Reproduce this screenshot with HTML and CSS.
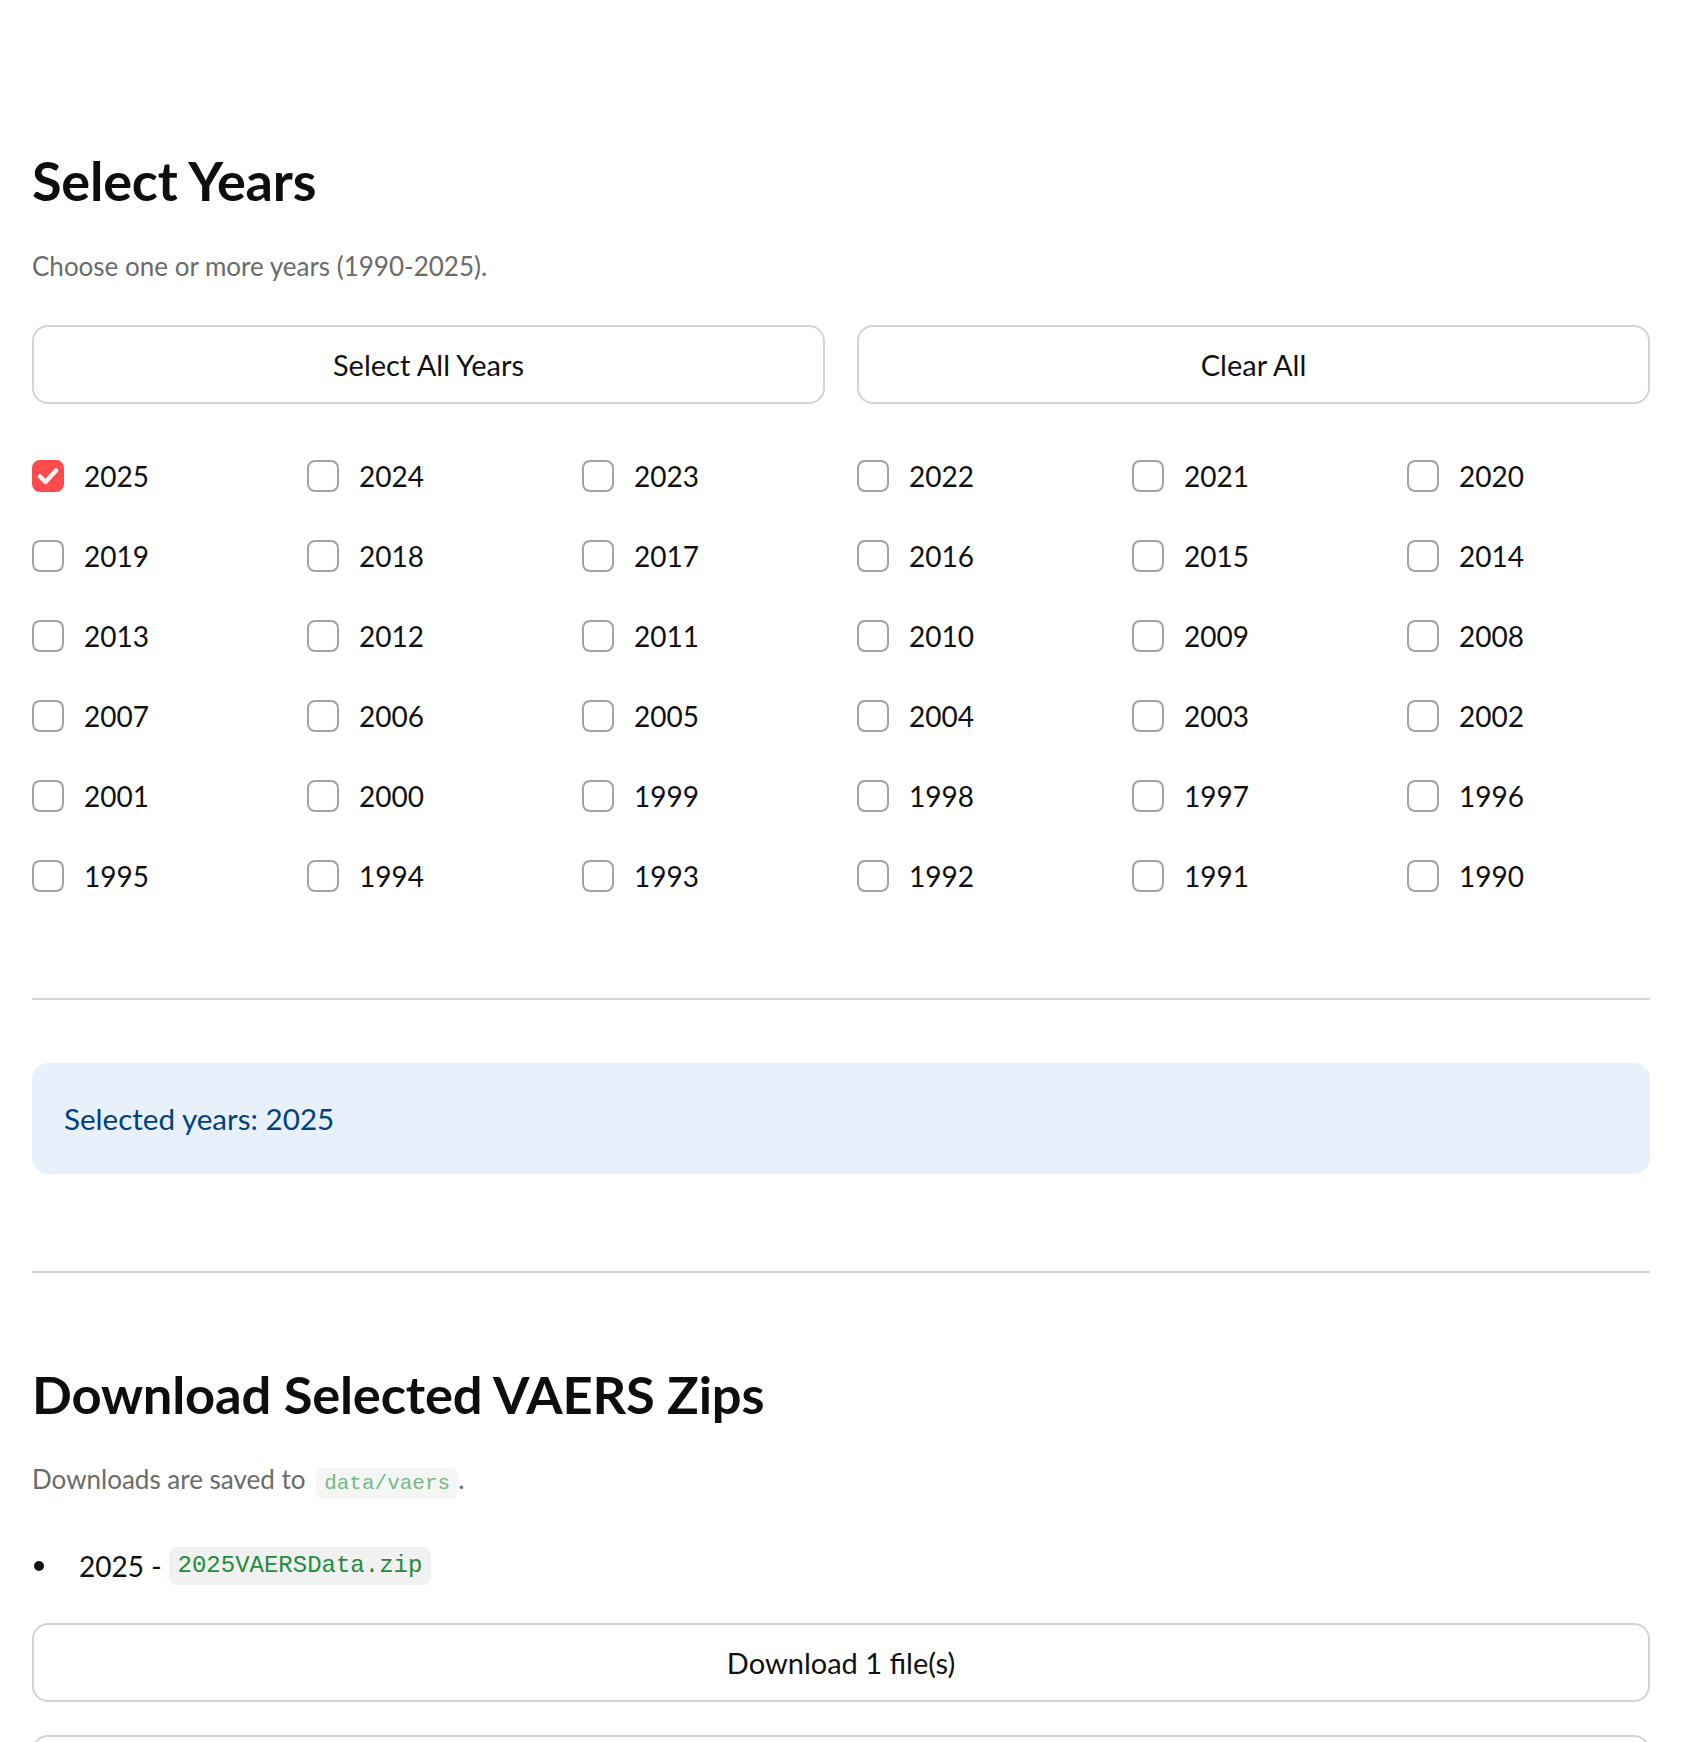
FILE: index.html
```html
<!DOCTYPE html>
<html lang="en">
<head>
<meta charset="utf-8">
<title>Select Years</title>
<link rel="stylesheet" href="styles.css">
</head>
<body>
<main class="page">
  <h2 class="title first">Select Years</h2>
  <p class="caption cap1">Choose one or more years (1990-2025).</p>
  <div class="btn-row">
    <button class="btn">Select All Years</button>
    <button class="btn">Clear All</button>
  </div>
  <div class="year-grid">
    <label class="year"><span class="box checked"><svg viewBox="0 0 32 32" width="32" height="32"><polyline points="8,16.5 13.5,22 24,10.5" fill="none" stroke="#f4f4f6" stroke-width="4.5" stroke-linecap="round" stroke-linejoin="round"/></svg></span><span class="yl">2025</span></label>
    <label class="year"><span class="box"></span><span class="yl">2024</span></label>
    <label class="year"><span class="box"></span><span class="yl">2023</span></label>
    <label class="year"><span class="box"></span><span class="yl">2022</span></label>
    <label class="year"><span class="box"></span><span class="yl">2021</span></label>
    <label class="year"><span class="box"></span><span class="yl">2020</span></label>
    <label class="year"><span class="box"></span><span class="yl">2019</span></label>
    <label class="year"><span class="box"></span><span class="yl">2018</span></label>
    <label class="year"><span class="box"></span><span class="yl">2017</span></label>
    <label class="year"><span class="box"></span><span class="yl">2016</span></label>
    <label class="year"><span class="box"></span><span class="yl">2015</span></label>
    <label class="year"><span class="box"></span><span class="yl">2014</span></label>
    <label class="year"><span class="box"></span><span class="yl">2013</span></label>
    <label class="year"><span class="box"></span><span class="yl">2012</span></label>
    <label class="year"><span class="box"></span><span class="yl">2011</span></label>
    <label class="year"><span class="box"></span><span class="yl">2010</span></label>
    <label class="year"><span class="box"></span><span class="yl">2009</span></label>
    <label class="year"><span class="box"></span><span class="yl">2008</span></label>
    <label class="year"><span class="box"></span><span class="yl">2007</span></label>
    <label class="year"><span class="box"></span><span class="yl">2006</span></label>
    <label class="year"><span class="box"></span><span class="yl">2005</span></label>
    <label class="year"><span class="box"></span><span class="yl">2004</span></label>
    <label class="year"><span class="box"></span><span class="yl">2003</span></label>
    <label class="year"><span class="box"></span><span class="yl">2002</span></label>
    <label class="year"><span class="box"></span><span class="yl">2001</span></label>
    <label class="year"><span class="box"></span><span class="yl">2000</span></label>
    <label class="year"><span class="box"></span><span class="yl">1999</span></label>
    <label class="year"><span class="box"></span><span class="yl">1998</span></label>
    <label class="year"><span class="box"></span><span class="yl">1997</span></label>
    <label class="year"><span class="box"></span><span class="yl">1996</span></label>
    <label class="year"><span class="box"></span><span class="yl">1995</span></label>
    <label class="year"><span class="box"></span><span class="yl">1994</span></label>
    <label class="year"><span class="box"></span><span class="yl">1993</span></label>
    <label class="year"><span class="box"></span><span class="yl">1992</span></label>
    <label class="year"><span class="box"></span><span class="yl">1991</span></label>
    <label class="year"><span class="box"></span><span class="yl">1990</span></label>
  </div>
  <hr class="divider d1">
  <div class="info">Selected years: 2025</div>
  <hr class="divider d2">
  <h2 class="title second">Download Selected VAERS Zips</h2>
  <p class="caption cap2">Downloads are saved to <code class="code-muted">data/vaers</code>.</p>
  <ul class="files">
    <li><span class="item-text">2025 -</span><code class="code">2025VAERSData.zip</code></li>
  </ul>
  <button class="btn wide dl">Download 1 file(s)</button>
  <button class="btn wide next"></button>
</main>
</body>
</html>
```

FILE: styles.css
```css
html, body {
  margin: 0;
  padding: 0;
  background: #ffffff;
}
body {
  font-family: "Source Sans Pro", Lato, "Noto Sans", sans-serif;
  color: #111111;
  overflow: hidden;
}
.page {
  padding: 0 32px;
  width: 1618px;
  display: flex;
  flex-direction: column;
}
.title {
  font-size: 54px;
  font-weight: 700;
  line-height: 1.2;
  margin: 0;
  color: #0e0e0e;
  letter-spacing: -0.2px;
}
.title.first { margin-top: 149px; }
.title.second {
  margin-top: 89px;
  font-size: 52.5px;
  line-height: 63px;
}
.caption {
  font-size: 26px;
  line-height: 39px;
  color: #6b6b6b;
  margin: 0;
}
.cap1 { margin-top: 33px; }
.cap2 { margin-top: 35px; }
.btn-row {
  margin-top: 39px;
  display: grid;
  grid-template-columns: 1fr 1fr;
  gap: 32px;
}
.btn {
  height: 79px;
  border: 2px solid #d3d3d5;
  border-radius: 16px;
  background: #ffffff;
  font-family: inherit;
  font-size: 29px;
  color: #111111;
  padding: 0 24px;
  display: flex;
  align-items: center;
  justify-content: center;
}
.year-grid {
  margin-top: 32px;
  display: grid;
  grid-template-columns: repeat(6, 1fr);
  column-gap: 32px;
  grid-auto-rows: 80px;
}
.year {
  display: flex;
  align-items: center;
  gap: 20px;
  font-size: 28px;
}
.box {
  width: 32px;
  height: 32px;
  box-sizing: border-box;
  border: 2px solid #a3a3a6;
  border-radius: 8px;
  flex: none;
  display: flex;
}
.box.checked {
  background: #ff4b4b;
  border-color: #ff4b4b;
}
.box.checked svg {
  margin: -2px;
}
.divider {
  border: 0;
  height: 2px;
  background: #d6d6d8;
  margin: 0;
  width: 100%;
}
.d1 { margin-top: 82px; }
.d2 { margin-top: 97px; }
.info {
  margin-top: 63px;
  height: 111px;
  box-sizing: border-box;
  background: #e8f0fb;
  border-radius: 16px;
  padding: 0 32px;
  display: flex;
  align-items: center;
  font-size: 29.6px;
  color: #004280;
}
.code-muted {
  font-family: "Liberation Mono", "DejaVu Sans Mono", monospace;
  font-size: 21px;
  background: #f5f5f5;
  color: #74b985;
  border-radius: 8px;
  padding: 4px 8px;
  margin-left: 4px;
}
.files {
  margin: 40px 0 0 0;
  padding: 0;
  list-style: none;
  font-size: 28px;
  line-height: 46px;
}
.files li {
  display: flex;
  align-items: center;
}
.files li::before {
  content: "";
  width: 10px;
  height: 10px;
  border-radius: 50%;
  background: #111111;
  margin-left: 2px;
  margin-right: 35px;
  flex: none;
}
.item-text {
  margin-right: 7px;
}
.code {
  font-family: "Liberation Mono", "DejaVu Sans Mono", monospace;
  font-size: 24px;
  line-height: 38px;
  background: #f1f1f1;
  color: #1e8c3c;
  border-radius: 8px;
  padding: 0 9px;
}
.wide { width: 100%; }
.dl { margin-top: 34px; }
.next { margin-top: 33px; }
```
